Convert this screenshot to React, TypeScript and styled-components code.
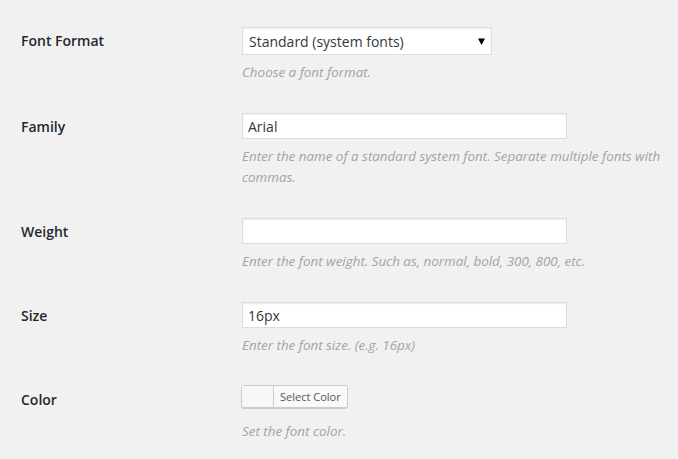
import React from "react";
import styled, { createGlobalStyle } from "styled-components";

const Global = createGlobalStyle`
  html, body { margin: 0; padding: 0; background: #f1f1f1; }
  body { font-family: "Open Sans", "Liberation Sans", sans-serif; color: #444; }
`;

const Page = styled.div`
  padding: 12px 8px 0 21px;
`;

const Row = styled.div`
  display: grid;
  grid-template-columns: 210px 1fr;
`;

const Label = styled.div`
  padding: 20px 10px 20px 0;
  font-size: 14px;
  font-weight: 600;
  line-height: 18px;
  color: #23282d;
`;

const Field = styled.div`
  padding: 15px 0 15px 11px;
`;

const SelectWrap = styled.div`
  position: relative;
  width: 250px;
`;

const Select = styled.select`
  appearance: none;
  -webkit-appearance: none;
  display: block;
  width: 250px;
  height: 28px;
  margin: 0;
  padding: 0 24px 0 6px;
  border: 1px solid #ddd;
  border-radius: 0;
  background: #fff;
  box-shadow: inset 0 1px 2px rgba(0, 0, 0, 0.07);
  font-family: "Open Sans", "Liberation Sans", sans-serif;
  font-size: 14px;
  color: #32373c;
  box-sizing: border-box;
  outline: none;
`;

const Arrow = styled.svg`
  position: absolute;
  right: 7px;
  top: 11px;
  pointer-events: none;
`;

const TextInput = styled.input`
  display: block;
  width: 325px;
  height: 26px;
  margin: 0;
  padding: 0 5px;
  border: 1px solid #ddd;
  border-radius: 0;
  background: #fff;
  box-shadow: inset 0 1px 2px rgba(0, 0, 0, 0.07);
  font-family: "Open Sans", "Liberation Sans", sans-serif;
  font-size: 14px;
  color: #32373c;
  box-sizing: border-box;
  outline: none;
`;

const Description = styled.p<{ $gap?: number }>`
  margin: ${(p) => p.$gap ?? 7}px 0 0;
  font-size: 13.4px;
  font-style: italic;
  font-weight: 400;
  line-height: 21px;
  color: #a3a3a3;
`;

const ColorButton = styled.button`
  display: flex;
  align-items: stretch;
  height: 23px;
  margin: -1px 0 0 -1px;
  padding: 0;
  border: 1px solid #ccc;
  border-radius: 3px;
  background: #f7f7f7;
  box-shadow: 0 1px 0 #ccc;
  cursor: pointer;
  box-sizing: border-box;
  overflow: hidden;
`;

const Swatch = styled.span`
  width: 31px;
  background: #f7f7f7;
  border-right: 1px solid #ccc;
`;

const ButtonText = styled.span`
  display: flex;
  align-items: center;
  padding: 0 6px 0 6px;
  background: #f9f9f9;
  font-family: "Open Sans", "Liberation Sans", sans-serif;
  font-size: 11px;
  color: #555;
`;

export default function App() {
  return (
    <>
      <Global />
      <Page>
        <Row>
          <Label>Font Format</Label>
          <Field>
            <SelectWrap>
              <Select defaultValue="standard">
                <option value="standard">Standard (system fonts)</option>
              </Select>
              <Arrow width="7" height="7" viewBox="0 0 7 7">
                <polygon points="0,0.5 7,0.5 3.5,7" fill="#000" />
              </Arrow>
            </SelectWrap>
            <Description>Choose a font format.</Description>
          </Field>
        </Row>
        <Row>
          <Label>Family</Label>
          <Field>
            <TextInput defaultValue="Arial" />
            <Description>
              Enter the name of a standard system font. Separate multiple fonts with commas.
            </Description>
          </Field>
        </Row>
        <Row>
          <Label>Weight</Label>
          <Field>
            <TextInput defaultValue="" />
            <Description>Enter the font weight. Such as, normal, bold, 300, 800, etc.</Description>
          </Field>
        </Row>
        <Row>
          <Label>Size</Label>
          <Field>
            <TextInput defaultValue="16px" />
            <Description>Enter the font size. (e.g. 16px)</Description>
          </Field>
        </Row>
        <Row>
          <Label>Color</Label>
          <Field>
            <ColorButton type="button">
              <Swatch />
              <ButtonText>Select Color</ButtonText>
            </ColorButton>
            <Description $gap={13}>Set the font color.</Description>
          </Field>
        </Row>
      </Page>
    </>
  );
}
